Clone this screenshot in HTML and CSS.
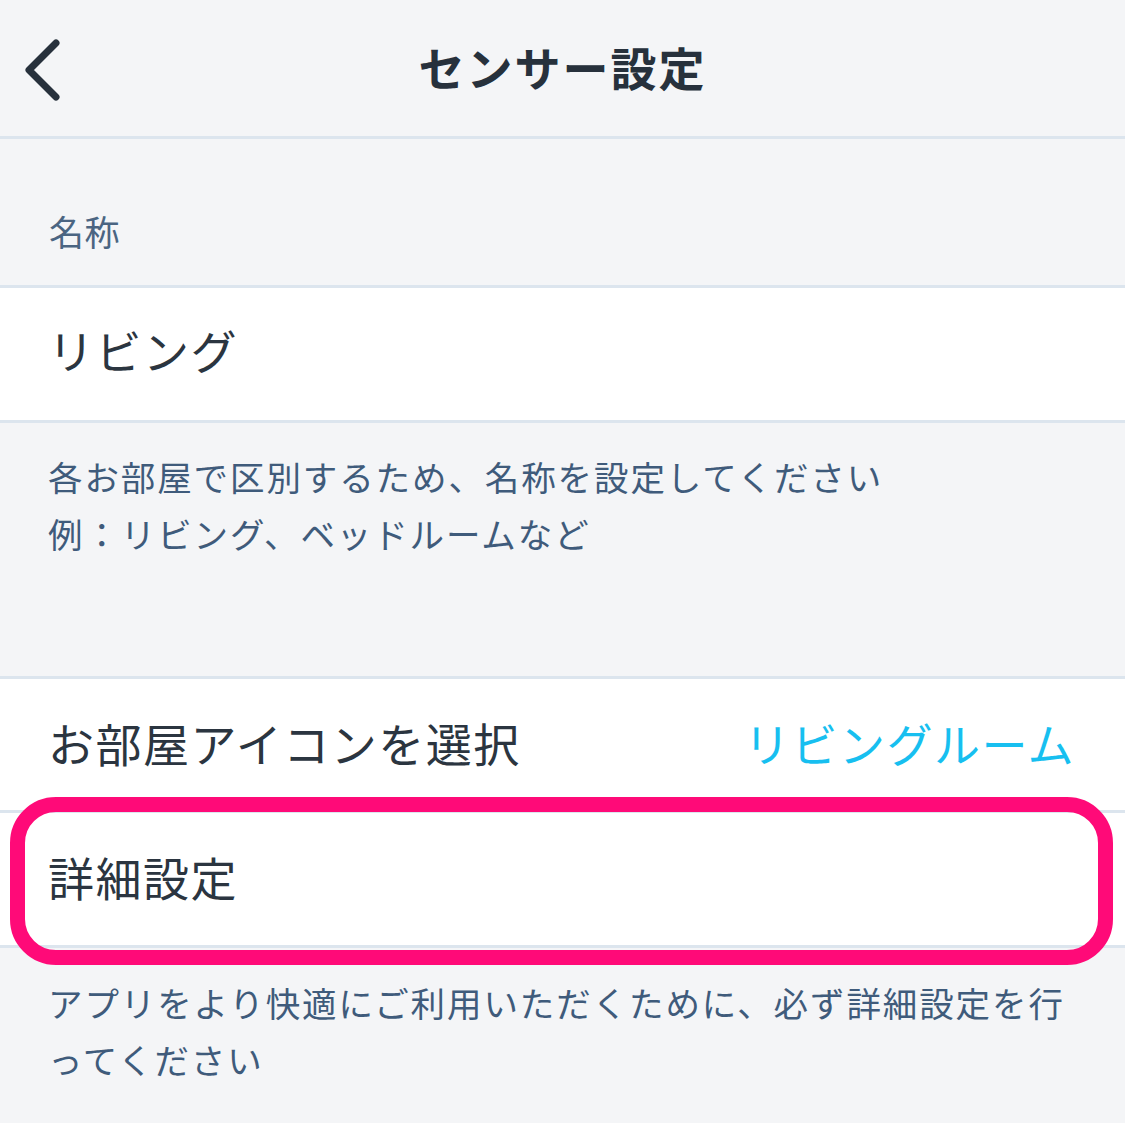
FILE: index.html
```html
<!DOCTYPE html>
<html lang="ja">
<head>
<meta charset="utf-8">
<link rel="stylesheet" href="styles.css">
</head>
<body>
<div class="screen">
  <header class="nav">
    <svg class="back" width="40" height="70" viewBox="0 0 40 70"><polyline points="33,8 6,35 33,62" fill="none" stroke="#27313c" stroke-width="7" stroke-linecap="round" stroke-linejoin="round"/></svg>
    <h1 class="title">センサー設定</h1>
  </header>
  <div class="label-area"><span class="label">名称</span></div>
  <div class="row row-name"><span class="row-text">リビング</span></div>
  <div class="help help-1">
    <p>各お部屋で区別するため、名称を設定してください</p>
    <p>例：リビング、ベッドルームなど</p>
  </div>
  <div class="group">
    <div class="row row-icon"><span class="row-text">お部屋アイコンを選択</span><span class="row-value">リビングルーム</span></div>
    <div class="row row-detail"><span class="row-text">詳細設定</span></div>
    <div class="highlight"></div>
  </div>
  <div class="help help-2">
    <p>アプリをより快適にご利用いただくために、必ず詳細設定を行ってください</p>
  </div>
</div>
</body>
</html>
```
FILE: styles.css
```css
* { box-sizing: border-box; }
html, body { margin: 0; padding: 0; }
body {
  background: #f4f5f7;
  font-family: "Noto Sans CJK JP", "Noto Sans", sans-serif;
  width: 1125px;
  height: 1123px;
  overflow: hidden;
}
.screen { display: flex; flex-direction: column; }
.nav {
  position: relative;
  height: 139px;
  border-bottom: 3px solid #dce5ee;
  display: flex;
  align-items: center;
  justify-content: center;
}
.back { position: absolute; left: 23px; top: 35px; }
.title {
  margin: 0;
  font-size: 46px;
  font-weight: 700;
  color: #27313c;
  letter-spacing: 2px;
  margin-top: -4px;
}
.label-area {
  height: 149px;
  border-bottom: 3px solid #dce5ee;
  display: flex;
  align-items: flex-end;
  padding: 0 49px 29px;
}
.label { font-size: 35px; color: #4b6582; line-height: 50px; letter-spacing: 0.5px; }
.row {
  background: #fff;
  display: flex;
  align-items: center;
  justify-content: space-between;
  padding: 0 50px 6px 48px;
  border-bottom: 3px solid #dce5ee;
}
.row-name { height: 135px; padding-bottom: 10px; }
.row-text { font-size: 46px; color: #2b3540; letter-spacing: 1.5px; }
.row-value { font-size: 46px; color: #17bff0; letter-spacing: 1.5px; }
.help {
  padding: 25px 50px 0 48px;
}
.help p {
  margin: 0;
  font-size: 34.5px;
  line-height: 57px;
  color: #3f5b7b;
  letter-spacing: 1.9px;
}
.help-1 { height: 256px; border-bottom: 3px solid #dce5ee; }
.help-2 { padding-top: 26px; }
.group { position: relative; }
.row-icon { height: 134px; }
.row-detail { height: 135px; }
.highlight {
  position: absolute;
  left: 10px;
  right: 12px;
  top: 118px;
  height: 168px;
  border: 15px solid #ff0a78;
  border-radius: 46px;
}
```
